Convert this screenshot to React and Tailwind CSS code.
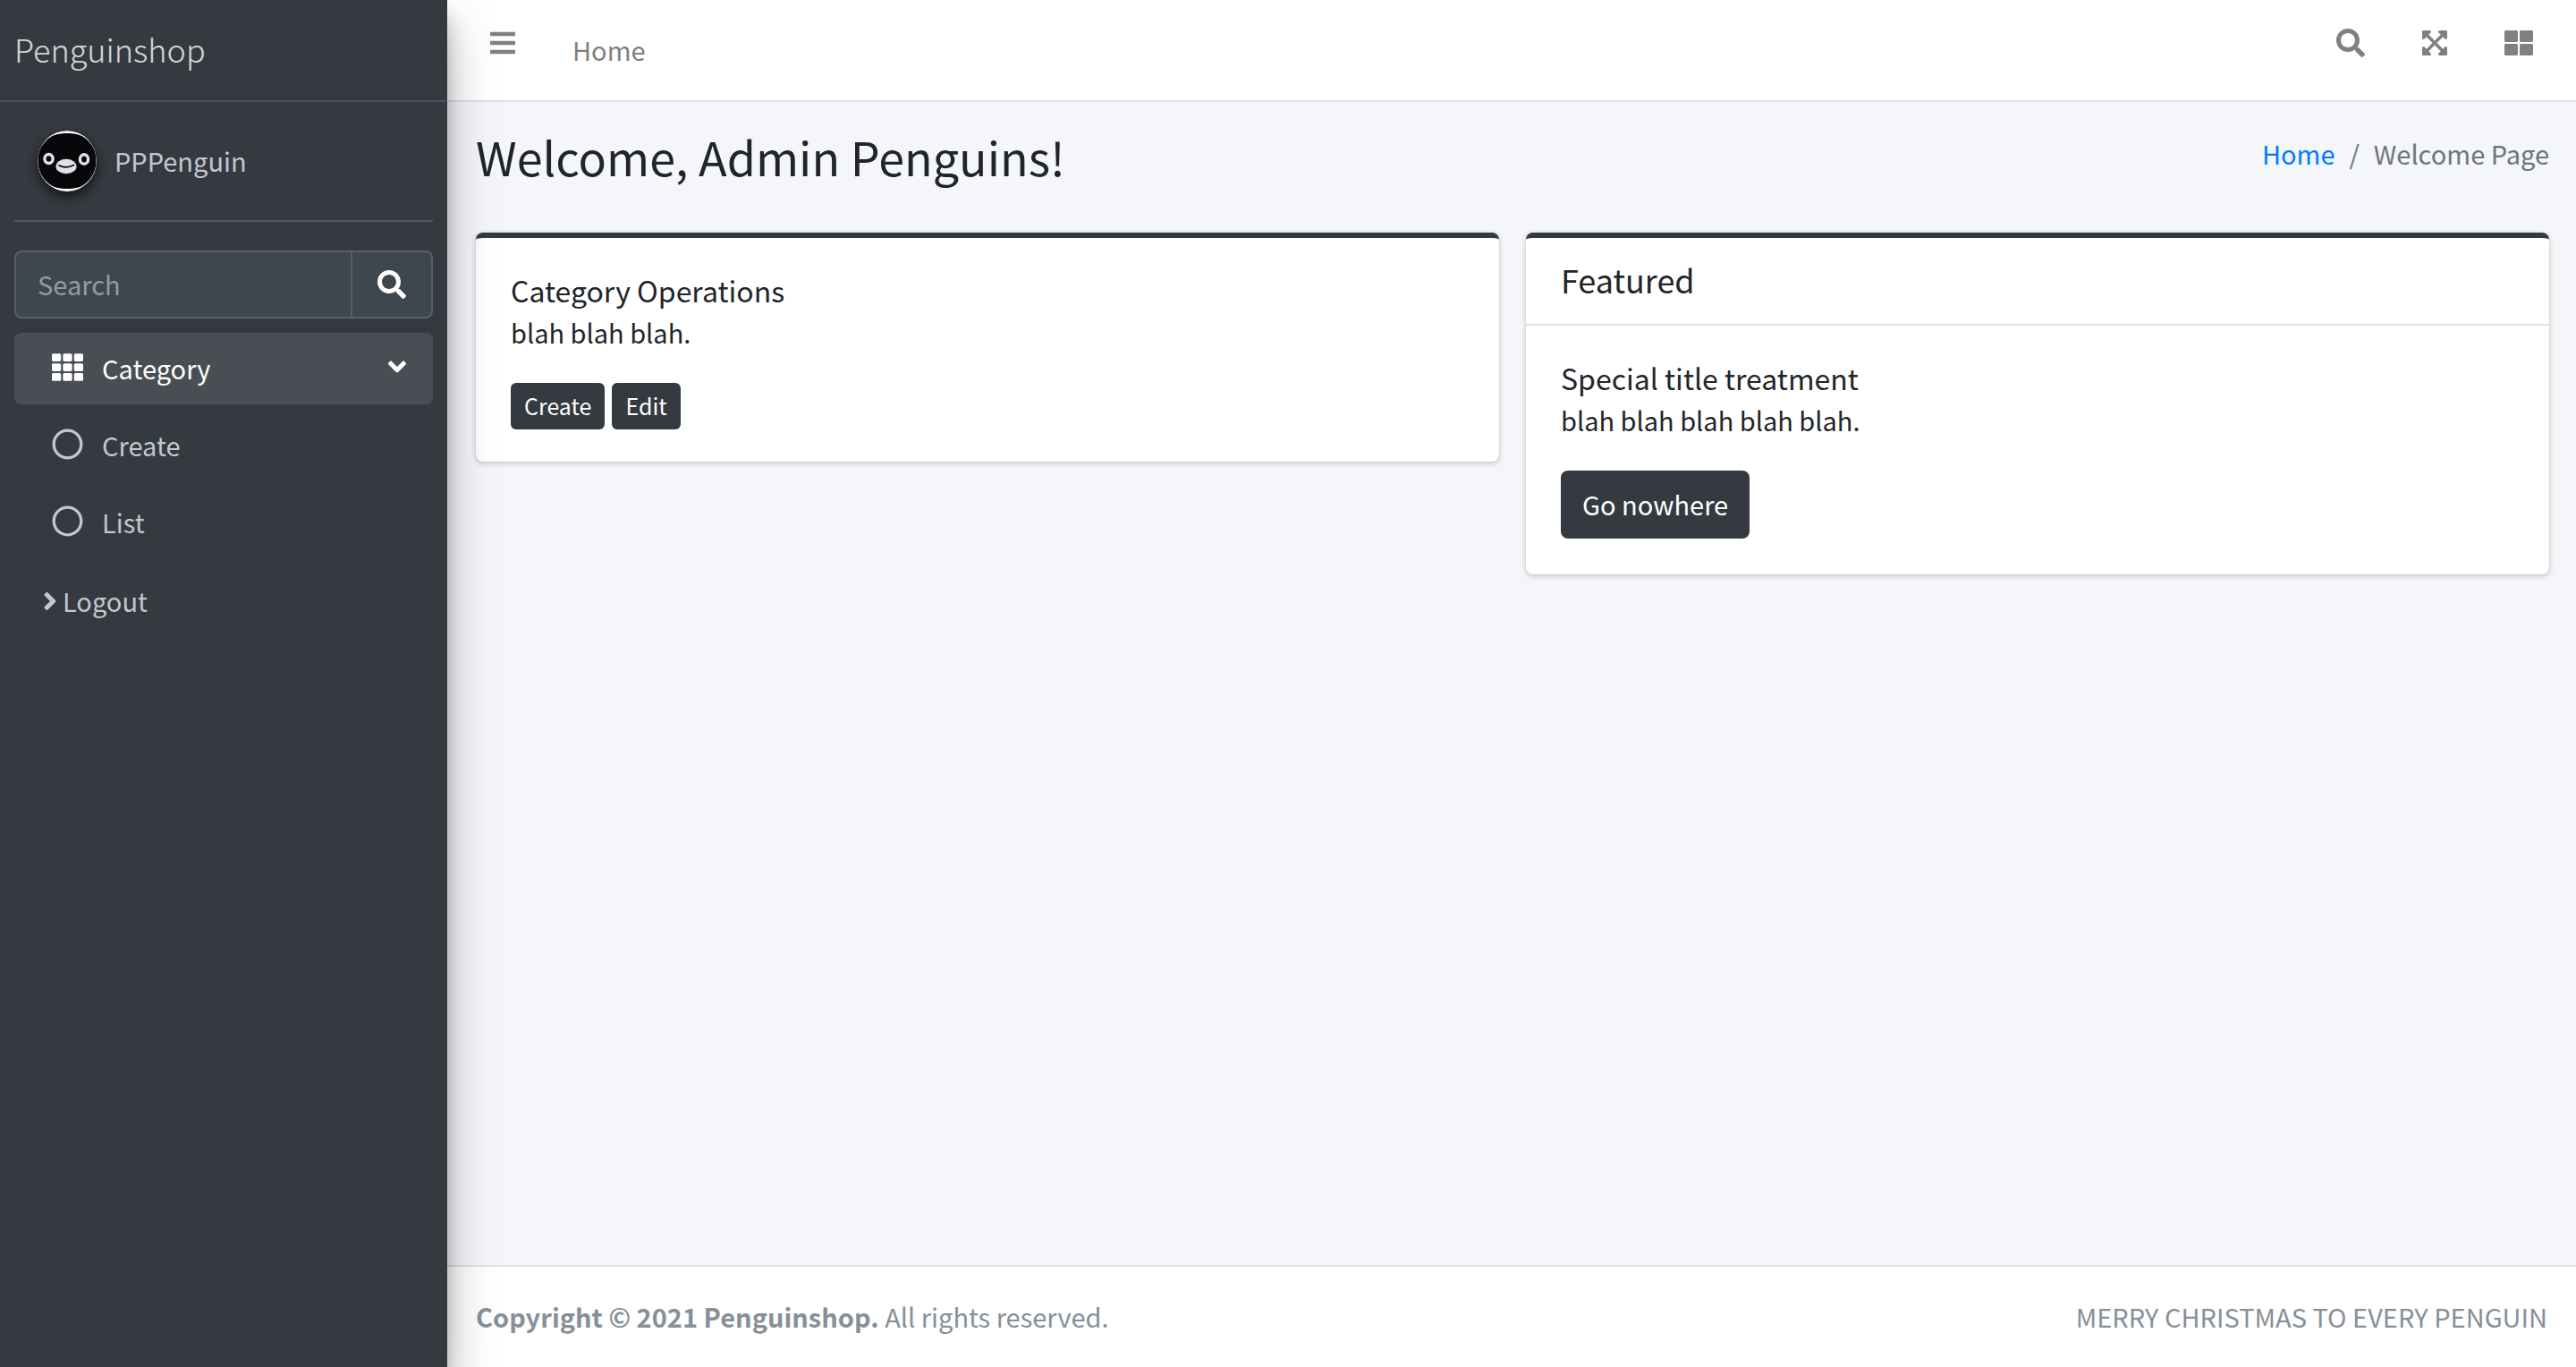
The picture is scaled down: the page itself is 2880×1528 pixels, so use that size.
import React from "react";
import {
  FaAngleDown,
  FaAngleRight,
  FaBars,
  FaExpandArrowsAlt,
  FaRegCircle,
  FaSearch,
  FaTh,
  FaThLarge,
} from "react-icons/fa";

function PenguinAvatar() {
  return (
    <svg
      viewBox="0 0 66 68"
      className="h-[68px] w-[66px] shrink-0 rounded-full shadow-[0_6px_12px_rgba(0,0,0,0.3),0_6px_12px_rgba(0,0,0,0.35)]"
      aria-hidden="true"
    >
      <ellipse cx="33" cy="34" rx="33" ry="34" fill="#ffffff" />
      <path
        d="M33 3C44 3 51 5 57 12C63 18 65.500 25 65.500 34C65.500 43 62 51 56 57C50 63 44 65 33 65C22 65 16 63 10 57C4 51 0.500 43 0.500 34C0.500 25 3 18 9 12C15 5 22 3 33 3Z"
        fill="#08080a"
      />
      <ellipse cx="12.500" cy="31.500" rx="4.600" ry="5" fill="none" stroke="#e4e0ea" strokeWidth="3.400" />
      <ellipse cx="52" cy="32" rx="4.600" ry="5.200" fill="none" stroke="#e4e0ea" strokeWidth="3.400" />
      <ellipse cx="32" cy="40" rx="11.500" ry="8.200" fill="#e4e0ea" />
      <path d="M24 39Q32 43 40.500 38.500" fill="none" stroke="#08080a" strokeWidth="1.800" strokeLinecap="round" />
    </svg>
  );
}

function NavRow({ icon, label, trailing, active }) {
  return (
    <li>
      <a
        href="#"
        className={
          active
            ? "flex h-20 items-center rounded-lg bg-[#494e54] pr-[30px] pb-1 pl-[41px] text-white"
            : "flex h-20 items-center rounded-lg pr-[30px] pb-1 pl-[41px] text-[#c2c7d0]"
        }
      >
        <span className="flex w-[36px] justify-center text-[35px]">{icon}</span>
        <span className="ml-[21px] flex-1 pt-0.5">{label}</span>
        {trailing}
      </a>
    </li>
  );
}

function Sidebar() {
  return (
    <aside className="relative z-10 w-[500px] shrink-0 bg-[#343a40] shadow-[0_28px_56px_rgba(0,0,0,0.25),0_20px_20px_rgba(0,0,0,0.22)]">
      <a
        href="#"
        className="block border-b-2 border-[#4b545c] px-4 pt-[30px] pb-[34px] text-[36px] leading-[48px] font-light text-white/80"
      >
        Penguinshop
      </a>
      <div className="px-4">
        <div className="flex h-[134px] items-center gap-5 border-b-2 border-[#4f5962] pl-[26px]">
          <PenguinAvatar />
          <a href="#" className="pb-0.5 text-[#c2c7d0]">
            PPPenguin
          </a>
        </div>
        <form className="mt-8 flex h-[76px] overflow-hidden rounded-lg border-2 border-[#56606a] bg-[#3f474e]">
          <input
            type="search"
            placeholder="Search"
            aria-label="Search"
            className="min-w-0 flex-1 bg-transparent px-6 pb-0.5 text-white outline-none placeholder:text-[#939ba2]"
          />
          <button
            type="button"
            aria-label="Submit search"
            className="flex w-[90px] items-center justify-center border-l-2 border-[#56606a] text-[32px] text-white"
          >
            <FaSearch />
          </button>
        </form>
        <nav className="mt-4">
          <ul className="flex flex-col gap-[6px]">
            <NavRow
              active
              icon={<FaTh />}
              label="Category"
              trailing={<FaAngleDown className="w-5 text-[32px]" />}
            />
            <NavRow icon={<FaRegCircle />} label="Create" />
            <NavRow icon={<FaRegCircle />} label="List" />
            <li>
              <a href="#" className="flex h-[84px] items-center gap-1 pl-[30px] text-[#c2c7d0]">
                <FaAngleRight className="w-5 text-[32px]" />
                <span className="pb-0.5">Logout</span>
              </a>
            </li>
          </ul>
        </nav>
      </div>
    </aside>
  );
}

function TopBar() {
  return (
    <header className="flex justify-between border-b-2 border-[#dee2e6] bg-white px-12 pb-4 text-[#808080]">
      <div className="flex items-start">
        <button type="button" aria-label="Toggle sidebar" className="flex h-24 w-7 items-center text-[32px]">
          <FaBars />
        </button>
        <a href="#" className="ml-16 pt-[31px] leading-[48px]">
          Home
        </a>
      </div>
      <div className="flex h-24 items-center gap-16 text-[32px]">
        <button type="button" aria-label="Search">
          <FaSearch />
        </button>
        <button type="button" aria-label="Full screen" className="w-7">
          <FaExpandArrowsAlt className="-ml-0.5" />
        </button>
        <button type="button" aria-label="Control sidebar">
          <FaThLarge />
        </button>
      </div>
    </header>
  );
}

function Card({ header, children }) {
  return (
    <section className="flex-1 rounded-lg border-t-[6px] border-[#343a40] bg-white shadow-[0_0_2px_rgba(0,0,0,0.125),0_2px_6px_rgba(0,0,0,0.2)]">
      {header && (
        <h2 className="border-b-2 border-[#dfdfdf] px-[39px] pt-[22px] pb-[26px] text-[36px] leading-[48px]">
          {header}
        </h2>
      )}
      {children}
    </section>
  );
}

export default function App() {
  return (
    <div className="flex min-h-screen bg-[#f4f6f9] font-['Noto_Sans_CJK_SC','Noto_Sans',sans-serif] text-[29px] leading-[48px] text-[#212529]">
      <Sidebar />
      <div className="flex min-w-0 flex-1 flex-col">
        <TopBar />
        <main className="flex-1 pr-[30px] pl-8">
          <div className="flex items-start justify-between pt-[30px] pb-[54px]">
            <h1 className="text-[52px] leading-[62px]">Welcome, Admin Penguins!</h1>
            <nav aria-label="Breadcrumb" className="flex gap-4 leading-[54px] text-[#6c757d]">
              <a href="#" className="text-[#007bff]">
                Home
              </a>
              <span>/</span>
              <span>Welcome Page</span>
            </nav>
          </div>
          <div className="flex items-start gap-[30px]">
            <Card>
              <div className="px-[39px] pt-10 pb-9">
                <h3 className="text-[32px] leading-[36px]">Category Operations</h3>
                <p className="leading-[58px]">blah blah blah.</p>
                <div className="mt-7 flex gap-2 text-[25px] text-white">
                  <button type="button" className="h-[52px] rounded-md bg-[#343a40] px-[15px] pb-0.5">
                    Create
                  </button>
                  <button type="button" className="h-[52px] rounded-md bg-[#343a40] px-[15px] pb-0.5">
                    Edit
                  </button>
                </div>
              </div>
            </Card>
            <Card header="Featured">
              <div className="px-[39px] py-10">
                <h3 className="text-[32px] leading-[36px]">Special title treatment</h3>
                <p className="leading-[58px]">blah blah blah blah blah.</p>
                <button type="button" className="mt-7 block h-[76px] rounded-lg bg-[#343a40] px-6 pb-0.5 text-white">
                  Go nowhere
                </button>
              </div>
            </Card>
          </div>
        </main>
        <footer className="flex justify-between border-t-2 border-[#dee2e6] bg-white px-8 pt-[31px] pb-[33px] text-[#869099]">
          <p>
            <strong className="font-bold">Copyright © 2021 Penguinshop.</strong> All rights reserved.
          </p>
          <p>MERRY CHRISTMAS TO EVERY PENGUIN</p>
        </footer>
      </div>
    </div>
  );
}
